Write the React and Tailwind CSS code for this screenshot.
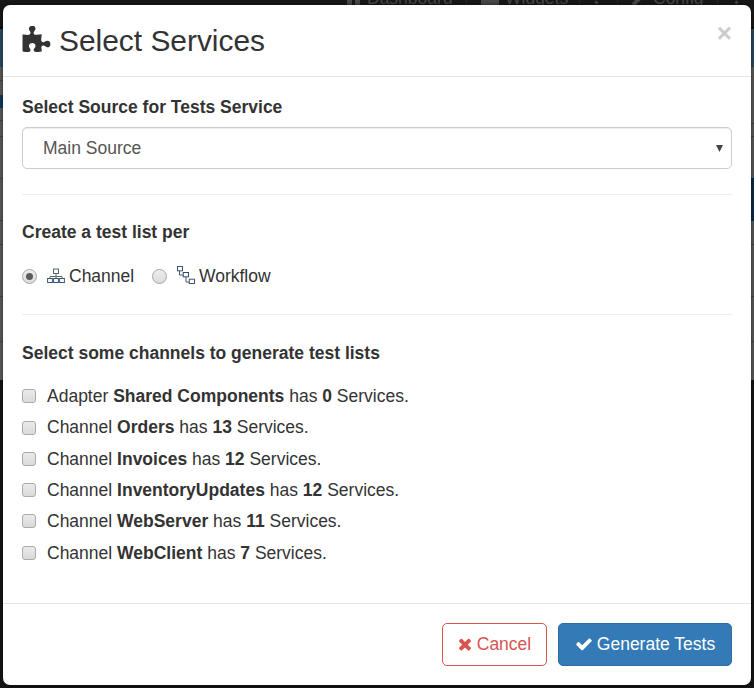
const PUZZLE =
  'M1755 1083q0 81-44.500 135t-123.500 54q-41 0-77.500-17.500t-59-38-56.500-38-71-17.500q-110 0-110 124 0 39 16 115t15 115v5q-22 0-33 1-34 3-97.500 11.500t-115.500 13.500-98 5q-61 0-103-26.500t-42-83.500q0-37 17.500-71t38-56.500 38-59 17.500-77.500q0-79-54-123.500t-135-44.500q-84 0-143 45.500t-59 127.500q0 43 15 83t33.500 64.500 33.500 53 15 50.500q0 45-46 89-37 35-117 35-95 0-245-24-9-2-27.500-4t-27.500-4l-13-2q-1 0-3-1-2 0-2-1v-1024q2 1 17.500 3.500t34 5 21.500 3.500q150 24 245 24 80 0 117-35 46-44 46-89 0-22-15-50.500t-33.500-53-33.500-64.500-15-83q0-82 59-127.500t144-45.500q80 0 134 44.500t54 123.500q0 41-17.500 77.500t-38 59-38 56.500-17.500 71q0 57 42 83.500t103 26.500q64 0 180-15t163-17v2q-1 2-3.500 17.500t-5 34-3.500 21.500q-24 150-24 245 0 80 35 117 44 46 89 46 22 0 50.500-15t53-33.500 64.500-33.500 83-15q82 0 127.500 59t45.500 143z';
const CHECK =
  'M1671 566q0 40-28 68l-724 724-136 136q-28 28-68 28t-68-28l-136-136-362-362q-28-28-28-68t28-68l136-136q28-28 68-28t68 28l294 295 656-657q28-28 68-28t68 28l136 136q28 28 28 68z';
const TIMES =
  'M1490 1322q0 40-28 68l-136 136q-28 28-68 28t-68-28l-294-294-294 294q-28 28-68 28t-68-28l-136-136q-28-28-28-68t28-68l294-294-294-294q-28-28-28-68t28-68l136-136q28-28 68-28t68 28l294 294 294-294q28-28 68-28t68 28l136 136q28 28 28 68t-28 68l-294 294 294 294q28 28 28 68z';

function Glyph({ d, className }) {
  return (
    <svg viewBox="0 0 1792 1792" fill="currentColor" className={className}>
      <path d={d} />
    </svg>
  );
}

function ChannelIcon() {
  return (
    <svg width="18" height="16" viewBox="0 0 18 16" fill="none" className="shrink-0">
      <path d="M9 5.500V10M3 10V8.500H15V10" stroke="#666" />
      <g fill="#fff" stroke="#54677a">
        <rect x="6.500" y="1" width="5" height="4.500" />
        <rect x="0.600" y="10.500" width="4.800" height="4" stroke="#34597c" />
        <rect x="6.600" y="10.500" width="4.800" height="4" stroke="#34597c" />
        <rect x="12.600" y="10.500" width="4.800" height="4" stroke="#34597c" />
      </g>
    </svg>
  );
}

function WorkflowIcon() {
  return (
    <svg width="18" height="18" viewBox="0 0 18 18" fill="none" className="shrink-0">
      <path d="M2.500 4.500V9H6M9 11V16H12" stroke="#555" />
      <g fill="#fff" stroke="#41556a">
        <rect x="0.500" y="0.500" width="5" height="4.300" />
        <rect x="6.200" y="6.500" width="5.300" height="4.300" stroke="#2c4c6c" />
        <rect x="12.300" y="13.200" width="5.200" height="4.300" />
      </g>
    </svg>
  );
}

function Radio({ checked }) {
  return (
    <span className="flex size-[15px] shrink-0 items-center justify-center rounded-full border border-[#a6a6a6] bg-linear-to-b from-[#ededed] to-[#dcdcdc]">
      {checked && <span className="size-[7px] rounded-full bg-[#5c5c5c]" />}
    </span>
  );
}

const services = [
  ['Adapter', 'Shared Components', 0],
  ['Channel', 'Orders', 13],
  ['Channel', 'Invoices', 12],
  ['Channel', 'InventoryUpdates', 12],
  ['Channel', 'WebServer', 11],
  ['Channel', 'WebClient', 7],
];

function Backdrop() {
  return (
    <div className="absolute inset-0 flex flex-col bg-[#151515]">
      <div className="relative h-[29px] shrink-0 overflow-hidden border-b-2 border-[#0c0c0c] bg-[#181818] text-[17.500px] leading-5 text-[#484848]">
        <div className="absolute -top-[12px] left-[347px] flex items-center whitespace-nowrap">
          <span className="mr-[7px] flex h-[17px] w-[13px] items-end justify-between">
            <span className="h-[9px] w-[5px] bg-[#484848]" />
            <span className="h-[9px] w-[5px] bg-[#484848]" />
          </span>
          <span className="w-[99px]">Dashboard</span>
          <span className="mr-[14px] h-5 w-px bg-[#252525]" />
          <span className="mr-[6px] mt-[10px] h-[7px] w-[18px] bg-[#484848]" />
          <span className="w-[74px]">Widgets</span>
          <span className="h-5 border-l border-dotted border-[#333]" />
          <span className="ml-[15px] mt-[9px] size-[3px] rotate-45 bg-[#484848]" />
          <span className="ml-[19px] h-5 w-px bg-[#252525]" />
          <span className="ml-[18px] mt-1 h-[14px] w-[4px] rotate-45 bg-[#484848]" />
          <span className="ml-[13px] w-[64px]">Config</span>
          <span className="h-5 border-l border-dotted border-[#333]" />
          <span className="ml-[17px] mt-[9px] size-[3px] rotate-45 bg-[#484848]" />
        </div>
      </div>
      <div className="h-[38px] shrink-0 bg-[#2b4b61]" />
      <div className="flex h-[313px] shrink-0 justify-between bg-[#5c5c5c]">
        <div className="flex w-[3px] flex-col">
          <div className="h-[14px] border-b border-[#454545]" />
          <div className="mt-[14px] h-[13px] bg-[#123a5e]" />
          <div className="mt-3 h-[17px] border-y border-[#454545]" />
          <div className="h-[42px] border-b border-[#454545]" />
          <div className="h-[42px] border-b border-[#454545]" />
          <div className="h-6 border-b border-[#454545]" />
          <div className="h-[52px] border-b border-[#454545]" />
          <div className="h-[45px] border-b border-[#454545]" />
        </div>
        <div className="flex w-[3px] flex-col">
          <div className="h-[57px] border-b border-[#454545]" />
          <div className="h-[13px] border-b border-[#454545]" />
          <div className="mt-[41px] h-[43px] bg-[#0d2c4a]" />
          <div className="h-6 border-b border-[#454545]" />
          <div className="h-[52px] border-b border-[#454545]" />
          <div className="h-[45px] border-b border-[#454545]" />
        </div>
      </div>
    </div>
  );
}

export default function App() {
  return (
    <div className="relative h-[688px] w-[754px] overflow-hidden p-[3px] pt-[5px] font-['Liberation_Sans',Arial,sans-serif] text-[17.500px] text-[#333]">
      <Backdrop />
      <div className="relative flex h-[680px] w-[748px] flex-col rounded-[7px] bg-white shadow-[0_0_4px_rgba(0,0,0,0.6)]">
        <header className="flex h-[72px] shrink-0 items-center border-b border-[#e5e5e5] pr-[19px] pl-[19px]">
          <Glyph d={PUZZLE} className="mr-[8px] -ml-[1px] size-[30px]" />
          <h1 className="text-[29.900px] leading-9">Select Services</h1>
          <button className="mb-[15px] ml-auto text-[26px] leading-none font-bold text-[#ccc]">×</button>
        </header>

        <main className="flex grow flex-col px-[19px]">
          <h2 className="mt-[18px] leading-6 font-bold">Select Source for Tests Service</h2>
          <div className="mt-[8px] flex h-[42px] items-center justify-between rounded-[5px] border border-[#ccc] pr-[8px] pl-[20px] text-[#555] shadow-[inset_0_1px_1px_rgba(0,0,0,0.075)]">
            <span>Main Source</span>
            <svg width="7" height="7" viewBox="0 0 7 7" fill="#444">
              <path d="M0 0H7L3.500 7Z" />
            </svg>
          </div>
          <hr className="mt-[25px] border-[#eee]" />
          <h2 className="mt-[25px] leading-6 font-bold">Create a test list per</h2>
          <div className="mt-[20px] flex h-6 items-center">
            <label className="flex w-[130px] items-center">
              <Radio checked />
              <span className="mr-1 ml-[10px]"><ChannelIcon /></span>
              Channel
            </label>
            <label className="flex items-center">
              <Radio />
              <span className="mr-1 mb-[2px] ml-[10px]"><WorkflowIcon /></span>
              Workflow
            </label>
          </div>
          <hr className="mt-[26px] border-[#eee]" />
          <h2 className="mt-[26px] leading-6 font-bold">Select some channels to generate test lists</h2>
          <ul className="mt-[15.600px]">
            {services.map(([kind, name, count]) => (
              <li key={name} className="flex h-[31.300px] items-center">
                <span className="mr-[11px] size-[14px] rounded-[3px] border border-[#aaa] bg-linear-to-b from-[#eaeaea] to-[#dadada]" />
                <span>
                  {kind} <b>{name}</b> has <b>{count}</b> Services.
                </span>
              </li>
            ))}
          </ul>
        </main>

        <footer className="flex h-[82px] shrink-0 items-start justify-end gap-[11px] border-t border-[#e5e5e5] px-[19px] pt-[19px]">
          <button className="flex h-[43px] w-[105px] items-center justify-center rounded-[5px] border border-[#d9534f] pr-[2px] text-[#d9534f]">
            <Glyph d={TIMES} className="mr-[3px] mb-[2px] size-[18px]" />
            Cancel
          </button>
          <button className="flex h-[43px] w-[174px] items-center justify-center rounded-[5px] border border-[#2e6da4] bg-[#337ab7] text-white">
            <Glyph d={CHECK} className="mr-[4px] mb-[2px] size-[18px]" />
            Generate Tests
          </button>
        </footer>
      </div>
    </div>
  );
}
